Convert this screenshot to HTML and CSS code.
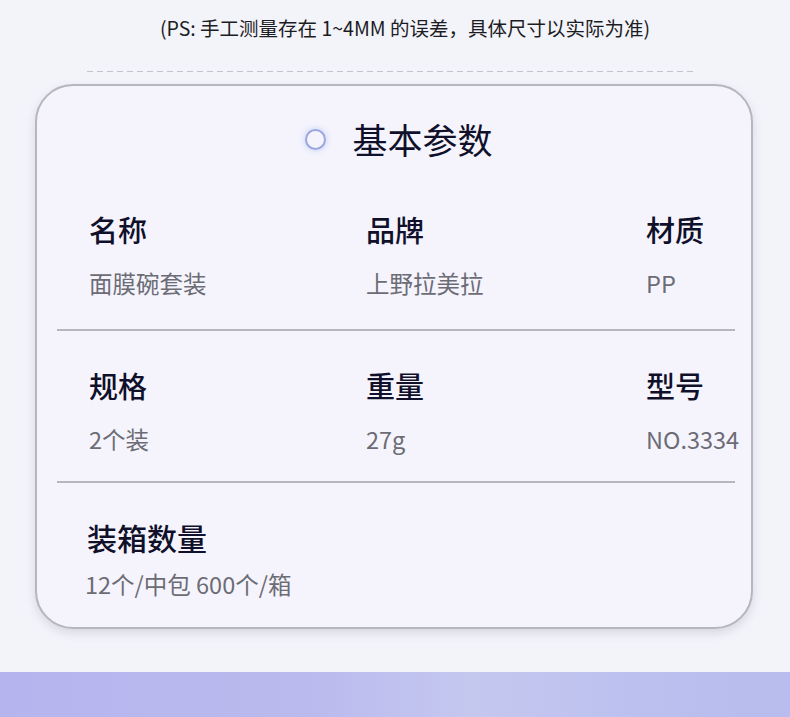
FILE: index.html
```html
<!DOCTYPE html>
<html lang="zh-CN">
<head>
    <meta charset="UTF-8">
    <meta name="viewport" content="width=device-width, initial-scale=1.0">
    <title>基本参数</title>
    <link rel="stylesheet" href="styles.css">
</head>
<body>
    <p class="note">(PS: 手工测量存在 1~4MM 的误差，具体尺寸以实际为准)</p>
    <div class="dash"></div>

    <section class="card">
        <h2 class="card-title"><span class="dot"></span>基本参数</h2>

        <div class="spec-row first">
            <div class="spec">
                <div class="spec-label">名称</div>
                <div class="spec-value">面膜碗套装</div>
            </div>
            <div class="spec">
                <div class="spec-label">品牌</div>
                <div class="spec-value">上野拉美拉</div>
            </div>
            <div class="spec">
                <div class="spec-label">材质</div>
                <div class="spec-value">PP</div>
            </div>
        </div>

        <div class="spec-row">
            <div class="spec">
                <div class="spec-label">规格</div>
                <div class="spec-value">2个装</div>
            </div>
            <div class="spec">
                <div class="spec-label">重量</div>
                <div class="spec-value">27g</div>
            </div>
            <div class="spec">
                <div class="spec-label">型号</div>
                <div class="spec-value">NO.3334</div>
            </div>
        </div>

        <div class="spec-row last">
            <div class="spec wide">
                <div class="spec-label">装箱数量</div>
                <div class="spec-value">12个/中包 600个/箱</div>
            </div>
        </div>
    </section>

    <div class="band"></div>
</body>
</html>
```

FILE: styles.css
```css
:root {
    --page-bg: #f3f3fa;
    --card-bg: #f5f4fd;
    --line: #b6b6bf;
    --label: #10102a;
    --value: #6c6c75;
}

body {
    margin: 0;
    background-color: var(--page-bg);
    font-family: "Noto Sans CJK SC", "Noto Sans", sans-serif;
    height: 717px;
    overflow: hidden;
}

.note {
    margin: 0;
    padding: 16px 0 0 20px;
    text-align: center;
    font-size: 19.5px;
    line-height: 24px;
    color: #1c1c24;
}

.dash {
    margin: 31px 93px 0 87px;
    height: 1px;
    background: repeating-linear-gradient(90deg, #c3c3cc 0 6px, transparent 6px 10px);
}

.card {
    margin: 12px 37px 0 35px;
    height: 545px;
    box-sizing: border-box;
    background-color: var(--card-bg);
    border: 2px solid var(--line);
    border-radius: 38px;
    box-shadow: 0 4px 10px rgba(90, 90, 120, 0.18);
    padding-top: 31px;
}

.card-title {
    margin: 0;
    display: flex;
    align-items: center;
    justify-content: center;
    gap: 26px;
    font-size: 35px;
    line-height: 44px;
    font-weight: 400;
    color: var(--label);
    padding-left: 10px;
}

.dot {
    width: 17px;
    height: 17px;
    border: 2px solid #9aa6de;
    border-radius: 50%;
    box-shadow: 0 0 6px rgba(150, 180, 240, 0.6);
}

.spec-row {
    display: grid;
    grid-template-columns: 277px 280px 1fr;
    margin: 0 16px 0 20px;
    padding: 36px 0 27px 32px;
    border-bottom: 2px solid var(--line);
}

.spec-row.first {
    padding-top: 50px;
    padding-bottom: 31px;
}

.spec-row.last {
    border-bottom: none;
    padding-top: 36px;
    padding-left: 30px;
}

.spec-label {
    font-size: 29px;
    line-height: 36px;
    font-weight: 500;
    color: var(--label);
}

.last .spec-label {
    font-size: 30px;
}

.spec-value {
    margin-top: 21px;
    font-size: 23.5px;
    line-height: 30px;
    color: var(--value);
}

.last .spec-value {
    margin-top: 14px;
    margin-left: -2px;
}

.band {
    margin-top: 43px;
    height: 60px;
    background: linear-gradient(90deg, #b5b4ee 0%, #bbbaee 40%, #c4c8ef 60%, #bcc0ee 80%, #b8bcee 100%);
}
```
